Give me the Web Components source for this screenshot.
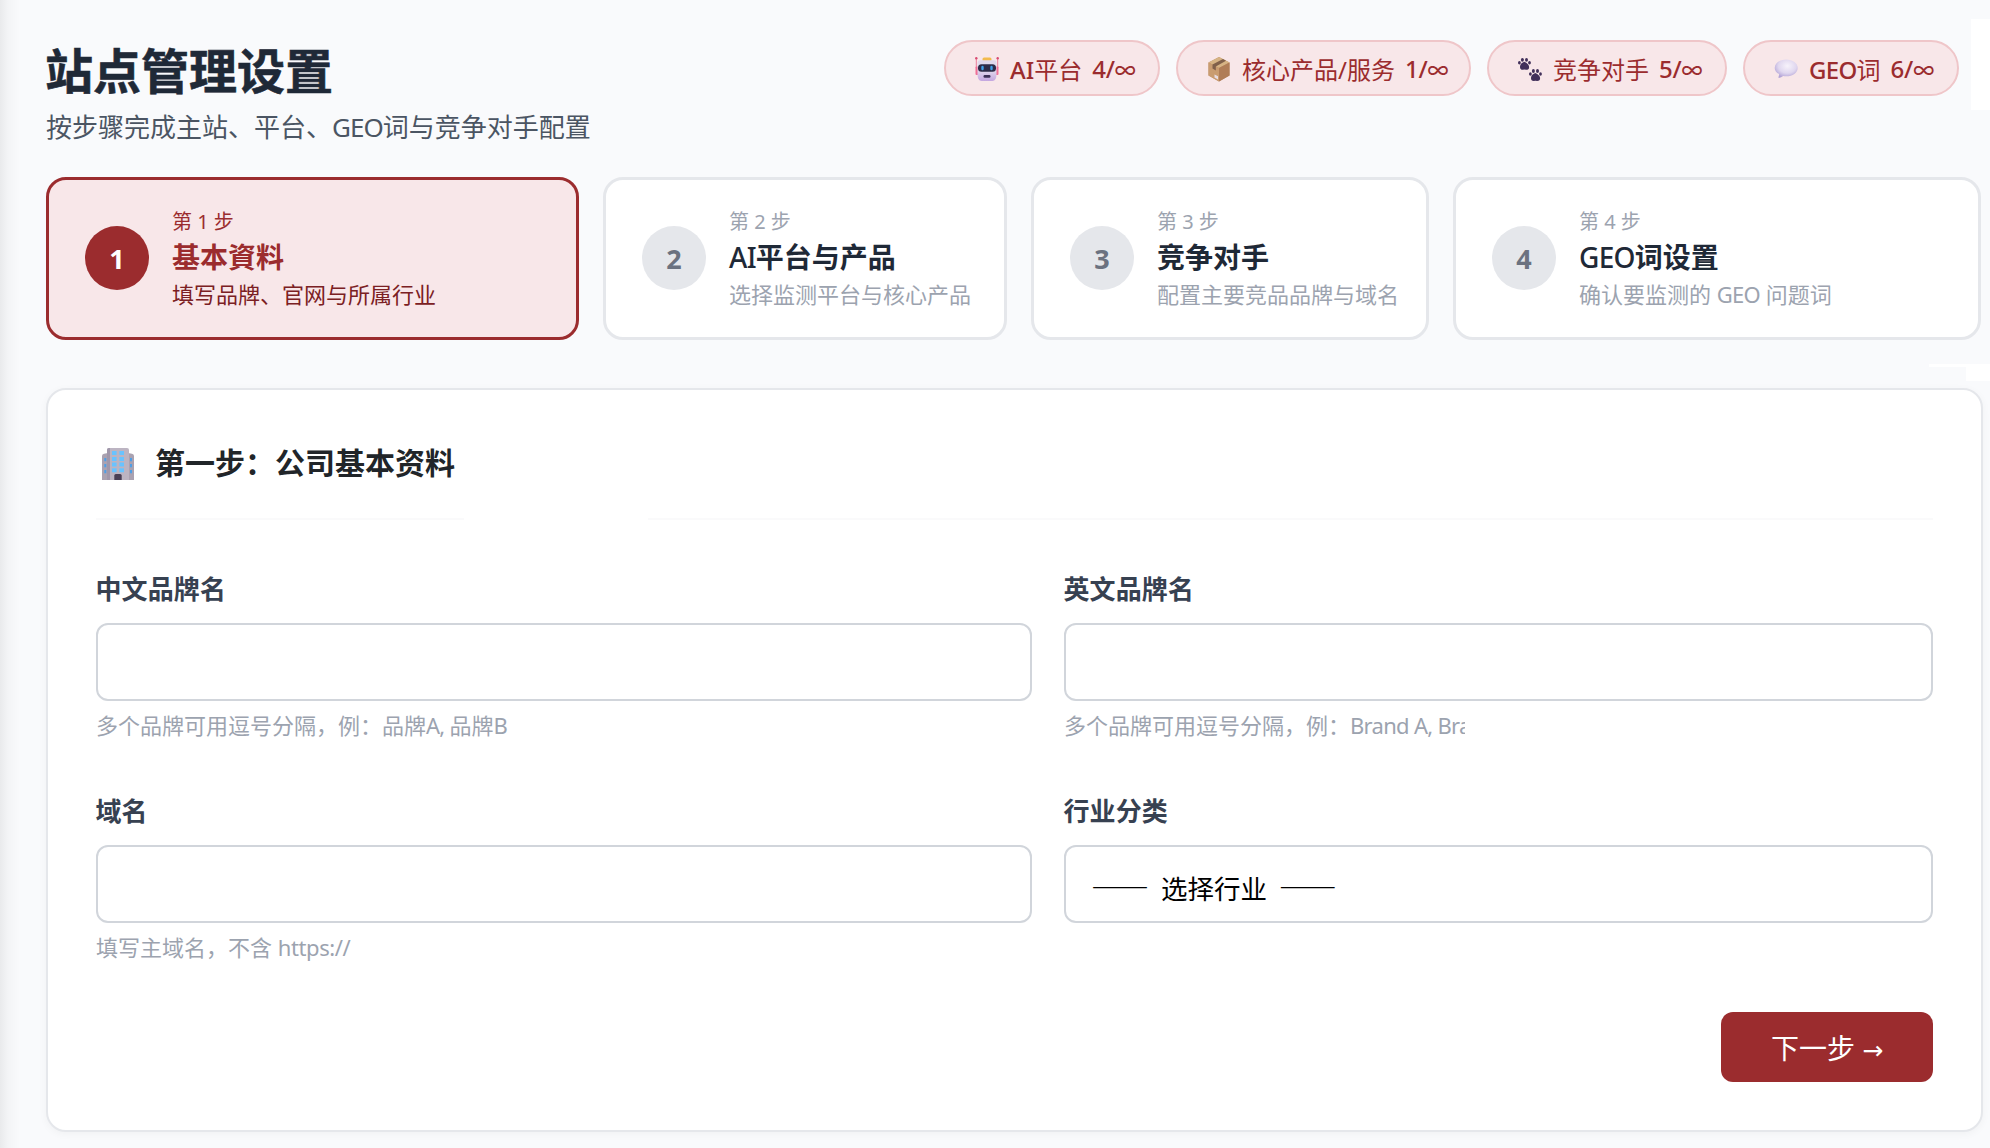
<!DOCTYPE html>
<html lang="zh-CN">
<head>
<meta charset="utf-8">
<title>站点管理设置</title>
<style>
  html, body { height: 100%; }
  body {
    margin: 0;
    overflow: hidden;
    background: #f9fafc;
    font-family: "Noto Sans", "Noto Sans CJK SC", sans-serif;
    color: #1f2937;
  }
</style>
</head>
<body>
<site-settings></site-settings>

<script>
// emoji.js
const EMOJI = {
  robot: `
    <path d="M1.300 1v10M22.700 1v10" stroke="#ea7d9a" stroke-width="1" fill="none"/>
    <circle cx="1.300" cy="1.300" r="1.200" fill="#d94c72"/><circle cx="22.700" cy="1.300" r="1.200" fill="#d94c72"/>
    <rect x=".5" y="9.500" width="3" height="8.500" rx="1" fill="#ef6f96"/><rect x="20.500" y="9.500" width="3" height="8.500" rx="1" fill="#ef6f96"/>
    <rect x="7.500" y=".6" width="9" height="4" rx="1.500" fill="#f3bb4d"/>
    <defs><linearGradient id="r" x2="0" y2="1"><stop offset=".5" stop-color="#e0d8ec"/><stop offset="1" stop-color="#c4a6e0"/></linearGradient></defs>
    <path d="M5 3.300h14q2.500 0 2.500 3v11q0 6.700-4 6.700h-11q-4 0-4-6.700v-11q0-3 2.500-3z" fill="url(#r)"/>
    <rect x="3" y="7.200" width="18" height="7.600" rx="3.500" fill="#2d2b48"/>
    <rect x="6.300" y="8.700" width="2.400" height="4.600" rx="1.200" fill="#3f9fe8"/><rect x="15.300" y="8.700" width="2.400" height="4.600" rx="1.200" fill="#3f9fe8"/>
    <rect x="8.500" y="18" width="7" height="2.800" rx="1.200" fill="#3d3158"/>`,
  box: `
    <path d="M12 0l10.500 5.500v13L12 24.500 1.500 18.500v-13z" fill="#b98b63"/>
    <path d="M12 0l10.500 5.500L12 11 1.500 5.500z" fill="#d6b384"/>
    <path d="M12 11l10.500-5.500v13L12 24.500z" fill="#b07d57"/>
    <path d="M1.500 5.500L12 11v13.500L1.500 18.500z" fill="#c99c70"/>
    <path d="M5.500 7.600L16 2.100l3 1.600L8.800 9.400v4l-3.300-1.800z" fill="#80604a"/>
    <path d="M7.500 17.500l3.500 1.800v3.200l-3.500-2z" fill="#e8dce2"/>`,
  paws: [[0, 0], [11, 11.2]].map(([x, y]) => `
    <g fill="#41305a" transform="translate(${x} ${y})"><path d="M2 9.800q0-3.300 4.300-5 4.400 1.800 4.800 5 .2 3-3 3-1.700-.4-3.300 0-2.900 0-2.800-3z"/>
    <ellipse cx="1.400" cy="5.800" rx="1.400" ry="1.800"/><ellipse cx="4.400" cy="2.800" rx="1.500" ry="1.900"/><ellipse cx="8.500" cy="2.800" rx="1.500" ry="1.900"/><ellipse cx="11.500" cy="5.800" rx="1.400" ry="1.800"/></g>`).join(''),
  bubble: `
    <defs><radialGradient id="b" cx=".55" cy=".35" r=".65"><stop offset="0" stop-color="#f7f3fb"/><stop offset=".6" stop-color="#e0d7ef"/><stop offset="1" stop-color="#b3a4d6"/></radialGradient></defs>
    <path d="M12.200 2.500c6.500 0 11.500 3.700 11.500 8.400s-5 8.400-11.500 8.400q-1.500 0-3-.3-2 1.700-4.200 1.900-.8-.2-.5-1 .6-1.300.6-2.900C2.300 15.500.7 13.500.7 10.900c0-4.700 5-8.400 11.500-8.400z" fill="url(#b)"/>`,
  building: `
    <path d="M0 8q0-2 2-2.300L6 5v27H0zM32 8q0-2-2-2.300L26 5v27h6z" fill="#aaa2b1"/>
    <path d="M5 2q0-2 2-2h18q2 0 2 2v30H5z" fill="#bcb4c2"/>
    <path d="M5 2q0-2 2-2h1v32H5z" fill="#a097aa"/>
    <path d="M10 3h4.600v4H10zM17.400 3H22v4h-4.600zM10 9h4.600v4H10zM17.400 9H22v4h-4.600zM10 14.600h4.600v4H10zM17.400 14.600H22v4h-4.600zM10 20.300h4.600v4H10zM17.400 20.300H22v4h-4.600z" fill="#69c3ff"/>
    <path d="M2.300 10h2v3.300h-2zM2.300 16h2v3.300h-2zM2.300 22h2v3.300h-2zM28 10h2v3.300h-2zM28 16h2v3.300h-2zM28 22h2v3.300h-2z" fill="#4f9fe6"/>
    <path d="M12.300 32v-4.500q0-1.500 1.500-1.500h4.400q1.500 0 1.500 1.500V32z" fill="#4a3f55"/>`
};

class EmojiIcon extends HTMLElement {
  constructor() {
    super();
    const box = this.getAttribute('name') == 'building' ? 32 : 24;
    this.attachShadow({mode: 'open'}).innerHTML = `
      <style>
        :host { display: block; flex: none; width: ${box}px; height: ${box}px; }
        svg { display: block; overflow: visible; }
      </style>
      <svg width="${box}" height="${box}" viewBox="0 0 ${box} ${box}">${EMOJI[this.getAttribute('name')]}</svg>
    `;
  }
}
customElements.define('emoji-icon', EmojiIcon);

// quota-pill.js
class QuotaPill extends HTMLElement {
  constructor() {
    super();
    const [used, max] = this.getAttribute('count').split('/');
    this.attachShadow({mode: 'open'}).innerHTML = `
      <style>
        :host {
          display: flex;
          align-items: center;
          box-sizing: border-box;
          height: 56px;
          padding: 3px 0 0 29px;
          border: 2px solid #efc6c9;
          border-radius: 28px;
          background: #f8e7e9;
          color: #9b2c2e;
          font-size: 24px;
          font-weight: 500;
          line-height: 30px;
          white-space: nowrap;
        }
        emoji-icon { margin-top: -1px; }
        .label { margin: 0 10px 0 11px; }
        .count { letter-spacing: -0.2px; }
        .count span { font-size: 21px; }
        ::slotted(span) { font-weight: 400; }
      </style>
      <emoji-icon name="${this.getAttribute('icon')}"></emoji-icon>
      <span class="label"><slot></slot></span>
      <span class="count">${used}/<span>${max}</span></span>
    `;
  }
}
customElements.define('quota-pill', QuotaPill);

// step-card.js
class StepCard extends HTMLElement {
  constructor() {
    super();
    const num = this.getAttribute('num');
    this.attachShadow({mode: 'open'}).innerHTML = `
      <style>
        :host {
          display: flex;
          align-items: center;
          gap: 23px;
          box-sizing: border-box;
          height: 163px;
          padding: 0 0 0 36px;
          border: 3px solid #e5e7eb;
          border-radius: 20px;
          background: #fff;
          color: #9ca3af;
          white-space: nowrap;
        }
        .num {
          display: flex;
          align-items: center;
          justify-content: center;
          flex: none;
          width: 64px;
          height: 64px;
          margin-top: -1px;
          border-radius: 50%;
          background: #e5e7eb;
          color: #6b7280;
          font-size: 27px;
          font-weight: 700;
        }
        .step { padding-top: 1px; font-size: 20px; line-height: 30px; }
        .title { margin-top: -1px; font-size: 28px; font-weight: 700; line-height: 42px; color: #1f2937; }
        .desc { font-size: 22px; line-height: 33px; }
        ::slotted(b) { font-weight: 500; letter-spacing: -0.7px; }
        ::slotted(i) { font-style: normal; letter-spacing: -0.7px; }
        :host([active]) { border-color: #9b2c2e; background: #f8e7e9; color: #7b2023; }
        :host([active]) .num { background: #9b2c2e; color: #fff; }
        :host([active]) .step, :host([active]) .title { color: #9b2c2e; }
      </style>
      <div class="num">${num}</div>
      <div>
        <div class="step">第 ${num} 步</div>
        <div class="title"><slot name="lead"></slot><slot name="title"></slot></div>
        <div class="desc"><slot></slot></div>
      </div>
    `;
  }
}
customElements.define('step-card', StepCard);

// form-field.js
class FormField extends HTMLElement {
  constructor() {
    super();
    this.attachShadow({mode: 'open'}).innerHTML = `
      <style>
        :host { display: block; height: 222px; }
        .label { font-size: 26px; font-weight: 700; line-height: 40px; letter-spacing: 0.1px; color: #374151; text-indent: -0.5px; }
        .input {
          box-sizing: border-box;
          height: 78px;
          margin-top: 14px;
          padding: 4px 0 0 25px;
          border: 2px solid #d1d5db;
          border-radius: 12px;
          background: #fff;
          color: #000;
          font: 26.500px/74px "Noto Sans CJK SC", sans-serif;
          white-space: pre;
        }
        .hint { width: max-content; margin-top: 8px; font-size: 22px; line-height: 33px; color: #9ca3af; white-space: nowrap; }
        :host([clipped]) .hint { width: 401px; overflow: hidden; }
        ::slotted(i) { font-style: normal; letter-spacing: -0.7px; }
        ::slotted(b) { font-weight: 500; font-size: 29px; line-height: 1px; }
      </style>
      <div class="label">${this.getAttribute('label')}</div>
      <div class="input"><slot name="value"></slot></div>
      <div class="hint"><slot></slot></div>
    `;
  }
}
customElements.define('form-field', FormField);

// form-panel.js
class FormPanel extends HTMLElement {
  constructor() {
    super();
    this.attachShadow({mode: 'open'}).innerHTML = `
      <style>
        :host {
          display: block;
          box-sizing: border-box;
          width: 1937px;
          height: 744px;
          padding: 38px 48px 0;
          border: 2px solid #e5e7eb;
          border-radius: 20px;
          background: #fff;
          box-shadow: 0 2px 8px rgba(0, 0, 0, 0.04);
        }
        .head { display: flex; align-items: center; gap: 21px; height: 72px; padding-left: 6px; }
        .head h2 { margin: -3px 0 0; font-size: 30px; line-height: 44px; color: #212529; }
        .rule { display: flex; justify-content: space-between; height: 2px; margin-top: 18px; }
        .rule span { background: #fafafb; }
        .rule span:first-child { width: 368px; }
        .rule span:last-child { width: 1285px; }
        .fields { display: grid; grid-template-columns: 936px 869px; column-gap: 32px; margin-top: 49px; }
        .actions { display: flex; justify-content: flex-end; margin-top: -1px; }
        button {
          width: 212px;
          height: 70px;
          padding: 0;
          border: 0;
          border-radius: 12px;
          background: #9b2c2e;
          color: #fff;
          font: 28px "Noto Sans", "Noto Sans CJK SC", sans-serif;
        }
        button span { font: 25px "DejaVu Sans", sans-serif; }
      </style>
      <div class="head"><emoji-icon name="building"></emoji-icon><h2>第一步：公司基本资料</h2></div>
      <div class="rule"><span></span><span></span></div>
      <div class="fields"><slot></slot></div>
      <div class="actions"><button>下一步 <span>→</span></button></div>
    `;
  }
}
customElements.define('form-panel', FormPanel);

// site-settings.js
class SiteSettings extends HTMLElement {
  constructor() {
    super();
    this.attachShadow({mode: 'open'}).innerHTML = `
      <style>
        :host {
          display: block;
          position: relative;
          box-sizing: border-box;
          width: 1990px;
          height: 1148px;
          padding: 36px 0 0 46px;
          background: linear-gradient(90deg, #e9eaec 0, #f3f4f6 8px, #f9fafc 20px);
          overflow: hidden;
        }
        .top { display: flex; justify-content: space-between; height: 141px; padding-right: 31px; }
        h1 { margin: 0; font-size: 48px; line-height: 70px; text-indent: -1px; -webkit-text-stroke: 0.6px; }
        .sub { margin: 1px 0 0; font-size: 26px; line-height: 40px; color: #4b5563; }
        .sub span { letter-spacing: -1px; }
        .pills { display: flex; gap: 16px; padding-top: 4px; }
        .steps { display: grid; grid-template-columns: 533px 404px 398px 528px; gap: 24px; margin-bottom: 48px; }
        .patch { position: absolute; background: #fff; }
        .p1 { left: 1971px; top: 19px; width: 19px; height: 91px; }
        .p2 { left: 1929px; top: 364px; width: 61px; height: 3px; }
        .p3 { left: 1966px; top: 364px; width: 24px; height: 17px; }
      </style>
      <div class="patch p1"></div><div class="patch p2"></div><div class="patch p3"></div>
      <div class="top">
        <div>
          <h1>站点管理设置</h1>
          <p class="sub">按步骤完成主站、平台、<span>GEO</span>词与竞争对手配置</p>
        </div>
        <div class="pills">
          <quota-pill icon="robot" count="4/∞" style="width:216px">AI<span>平台</span></quota-pill>
          <quota-pill icon="box" count="1/∞" style="width:295px"><span>核心产品/服务</span></quota-pill>
          <quota-pill icon="paws" count="5/∞" style="width:240px"><span>竞争对手</span></quota-pill>
          <quota-pill icon="bubble" count="6/∞" style="width:216px"><span style="font-weight:500;letter-spacing:-0.7px">GEO</span><span>词</span></quota-pill>
        </div>
      </div>
      <div class="steps">
        <step-card num="1" active><span slot="title">基本資料</span>填写品牌、官网与所属行业</step-card>
        <step-card num="2"><b slot="lead">AI</b><span slot="title">平台与产品</span>选择监测平台与核心产品</step-card>
        <step-card num="3"><span slot="title">竞争对手</span>配置主要竞品品牌与域名</step-card>
        <step-card num="4"><b slot="lead">GEO</b><span slot="title">词设置</span>确认要监测的 <i>GEO</i> 问题词</step-card>
      </div>
      <form-panel>
        <form-field label="中文品牌名">多个品牌可用逗号分隔，例：品牌<i>A, </i>品牌<i>B</i></form-field>
        <form-field label="英文品牌名" clipped>多个品牌可用逗号分隔，例：<i>Brand A, Brand B</i></form-field>
        <form-field label="域名">填写主域名，不含 <i style="letter-spacing:-0.4px">https://</i></form-field>
        <form-field label="行业分类"><b slot="value">——</b><span slot="value">  选择行业  </span><b slot="value">——</b></form-field>
      </form-panel>
    `;
  }
}
customElements.define('site-settings', SiteSettings);
</script>
</body>
</html>
